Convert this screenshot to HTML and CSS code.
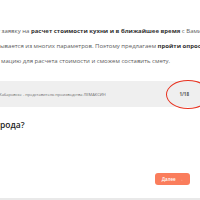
FILE: index.html
```html
<!DOCTYPE html>
<html lang="ru">
<head>
<meta charset="utf-8">
<link rel="stylesheet" href="styles.css">
</head>
<body>
<div class="page">
  <div class="intro">
    <p class="line l1">у заявку на <b>расчет стоимости кухни и в ближайшее время</b> с Вами свяжется наш менеджер.</p>
    <p class="line l2">ывается из многих параметров. Поэтому предлагаем <b>пройти опрос</b>, чтобы</p>
    <p class="line l3">мацию для расчета стоимости и сможем составить смету.</p>
  </div>
  <div class="bar">
    <span class="bar-text">в Хабаровске - представитель производства ЛЕМАКСИН</span>
    <span class="counter">1/18</span>
    <span class="ring"></span>
  </div>
  <h2 class="question">города?</h2>
  <div class="actions">
    <button class="next">Далее <span class="arrow">→</span></button>
  </div>
  <div class="footer"></div>
</div>
</body>
</html>
```
FILE: styles.css
```css
html, body {
  margin: 0;
  padding: 0;
  background: #ffffff;
}
.page {
  width: 200px;
  height: 200px;
  overflow: hidden;
  font-family: "Open Sans", "Liberation Sans", sans-serif;
  position: relative;
}
.intro {
  padding-top: 24px;
}
.line {
  margin: 0;
  white-space: nowrap;
  font-size: 6px;
  line-height: 15px;
  color: #5a5a5a;
}
.line b {
  color: #333333;
  font-weight: 700;
}
.l1 { margin-left: -3px; }
.l2 { margin-left: 0; }
.l3 { margin-left: 1px; }
.bar {
  margin-top: 12px;
  height: 26px;
  background: #efefef;
  display: flex;
  align-items: center;
  justify-content: space-between;
  padding: 0 11px 0 0;
  position: relative;
}
.bar-text {
  font-size: 4px;
  color: #6a6a6a;
  white-space: nowrap;
  margin-left: -4px;
}
.counter {
  font-size: 4.5px;
  font-weight: 700;
  color: #555555;
}
.ring {
  position: absolute;
  left: 166px;
  top: -1px;
  width: 42px;
  height: 27px;
  border: 1.5px solid #e8321f;
  border-radius: 50%;
}
.question {
  margin: 12px 0 0 -9px;
  font-size: 8.5px;
  line-height: 12px;
  font-weight: 600;
  color: #222222;
  white-space: nowrap;
}
.actions {
  display: flex;
  justify-content: flex-end;
  padding-right: 10px;
  margin-top: 42px;
}
.next {
  width: 35px;
  height: 12px;
  border: none;
  border-radius: 3px;
  background: #fa7d5c;
  color: #ffffff;
  font-family: inherit;
  font-size: 4.5px;
  font-weight: 600;
  padding: 0;
  display: flex;
  align-items: center;
  justify-content: center;
  gap: 3px;
}
.arrow {
  opacity: 0.6;
  font-weight: 400;
}
.footer {
  margin-top: 13px;
  height: 4px;
  background: #e9e9e9;
}
```
